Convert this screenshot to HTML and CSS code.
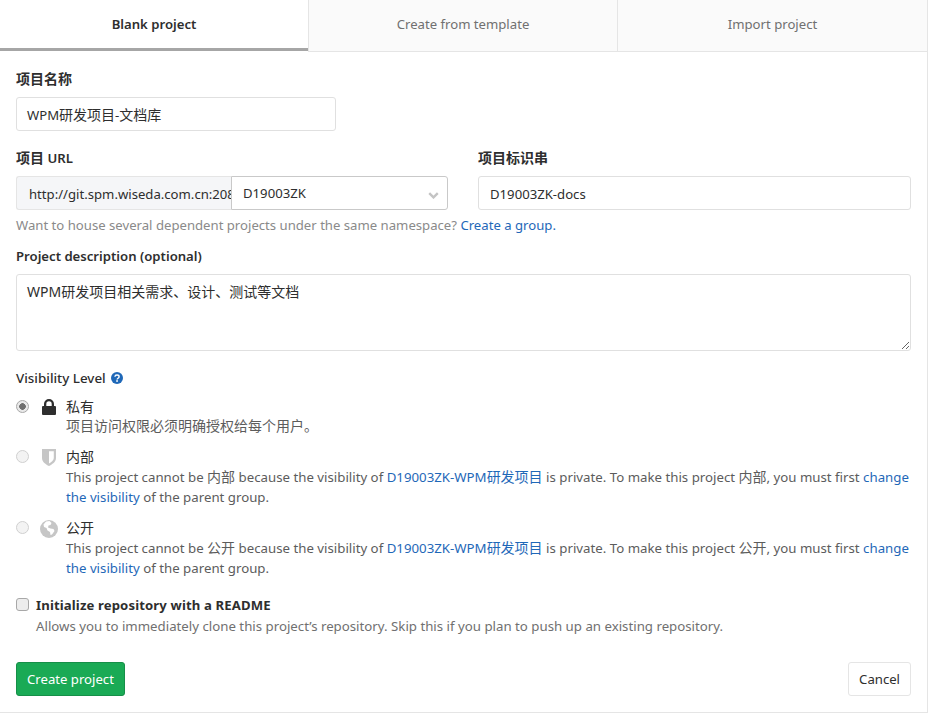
FILE: index.html
```html
<!DOCTYPE html>
<html lang="zh">
<head>
<meta charset="utf-8">
<title>New project</title>
<link rel="stylesheet" href="styles.css">
</head>
<body>
<div class="panel">
  <nav class="tabs">
    <a class="tab active">Blank project</a>
    <a class="tab middle">Create from template</a>
    <a class="tab">Import project</a>
  </nav>
  <form class="form">
    <div class="group name-group">
      <div class="label"><span class="cjk">项目名称</span></div>
      <div class="control name-input">WPM<span class="cjk">研发项目</span>-<span class="cjk">文档库</span></div>
    </div>
    <div class="url-row">
      <div class="url-col">
        <div class="label"><span class="cjk">项目</span> URL</div>
        <div class="url-input">
          <span class="addon">http://git.spm.wiseda.com.cn:20880/</span>
          <div class="select">
            <span>D19003ZK</span>
            <svg class="chevron" viewBox="0 0 14 9" width="11" height="7"><path d="M1.500 1.500 7 7l5.500-5.500" fill="none" stroke="#c4c4c4" stroke-width="3"/></svg>
          </div>
        </div>
      </div>
      <div class="slug-col">
        <div class="label"><span class="cjk">项目标识串</span></div>
        <div class="control slug">D19003ZK-docs</div>
      </div>
    </div>
    <p class="help">Want to house several dependent projects under the same namespace? <a class="link">Create a group.</a></p>
    <div class="group desc-group">
      <div class="label">Project description (optional)</div>
      <textarea class="control desc">WPM研发项目相关需求、设计、测试等文档</textarea>
    </div>
    <div class="vis-title">
      <span>Visibility Level</span>
      <svg class="q" viewBox="0 0 12 12" width="12" height="12"><circle cx="6" cy="6" r="6" fill="#1f68b8"/><path d="M3.900 4.700C4 3.500 4.900 3 6 3c1.200 0 2.100.7 2.100 1.700 0 1.600-2 1.500-2 2.900" fill="none" stroke="#fff" stroke-width="1.400"/><rect x="5.200" y="8.200" width="1.700" height="1.600" fill="#fff"/></svg>
    </div>
    <div class="vis-option first">
      <input class="radio checked" type="radio" name="vis" checked>
      <svg class="vis-icon" viewBox="0 0 14 16" width="14" height="16"><path d="M2 7V5a5 5 0 0 1 10 0v2h1a1 1 0 0 1 1 1v7a1 1 0 0 1-1 1H1a1 1 0 0 1-1-1V8a1 1 0 0 1 1-1Zm2.300 0h5.400V5a2.700 2.700 0 0 0-5.400 0Z" fill="#2e2e2e"/></svg>
      <div class="vis-text">
        <div class="vis-name cjk">私有</div>
        <div class="vis-desc tight cjk">项目访问权限必须明确授权给每个用户。</div>
      </div>
    </div>
    <div class="vis-option">
      <input class="radio" type="radio" name="vis" disabled>
      <svg class="vis-icon" viewBox="0 0 14 17" width="14" height="17"><path d="M0 0h14v9c0 4-4 6.500-7 8-3-1.500-7-4-7-8Zm7 2.200v12.300c2-1.100 4.800-3 4.800-5.500V2.200Z" fill="#c6c6c6"/></svg>
      <div class="vis-text">
        <div class="vis-name cjk">内部</div>
        <div class="vis-desc">This project cannot be <span class="cjk">内部</span> because the visibility of <a class="link">D19003ZK-WPM<span class="cjk">研发项目</span></a> is private. To make this project <span class="cjk">内部</span>, you must first <a class="link">change the visibility</a> of the parent group.</div>
      </div>
    </div>
    <div class="vis-option">
      <input class="radio" type="radio" name="vis" disabled>
      <svg class="vis-icon globe" viewBox="0 0 18 18" width="18" height="18"><circle cx="9" cy="9" r="9" fill="#c6c6c6"/><path d="M6 1.500 9.500 1l2 2-1 2-2 .5-.5 2 2.500 1 3 .5 1 2-2.500 3.500-1.500.5-.5-3-2.500-1.500-1-2.500L4 7l-.5-2.500Z" fill="#fff"/></svg>
      <div class="vis-text">
        <div class="vis-name cjk">公开</div>
        <div class="vis-desc">This project cannot be <span class="cjk">公开</span> because the visibility of <a class="link">D19003ZK-WPM<span class="cjk">研发项目</span></a> is private. To make this project <span class="cjk">公开</span>, you must first <a class="link">change the visibility</a> of the parent group.</div>
      </div>
    </div>
    <div class="readme">
      <input class="check" type="checkbox">
      <div>
        <div class="readme-title">Initialize repository with a README</div>
        <div class="readme-desc">Allows you to immediately clone this project’s repository. Skip this if you plan to push up an existing repository.</div>
      </div>
    </div>
    <div class="actions">
      <button class="btn primary" type="button">Create project</button>
      <button class="btn" type="button">Cancel</button>
    </div>
  </form>
</div>
</body>
</html>
```

FILE: styles.css
```css
* { box-sizing: border-box; }
html, body { margin: 0; background: #fff; }
body {
  font-family: "Noto Sans", "Noto Sans CJK SC", sans-serif;
  font-size: 13.15px;
  color: #2e2e2e;
  line-height: 20px;
}
.cjk { font-size: 14px; }
.panel {
  width: 928px;
  height: 713px;
  border-right: 1px solid #e5e5e5;
  border-bottom: 1px solid #e5e5e5;
}
.tabs {
  display: grid;
  grid-template-columns: 308px 310px 1fr;
  height: 52px;
}
.tab {
  display: flex;
  align-items: center;
  justify-content: center;
  padding-bottom: 3px;
  background: #fafafa;
  color: #707070;
  border-bottom: 1px solid #e5e5e5;
}
.middle {
  border-left: 1px solid #e5e5e5;
  border-right: 1px solid #e5e5e5;
}
.active {
  background: #fff;
  color: #2e2e2e;
  font-weight: 600;
  padding-bottom: 0;
  border-bottom: 3px solid #a6a6a6;
  height: 51px;
}
.form { padding: 17px 16px 0; }
.label {
  display: block;
  font-weight: 600;
  line-height: 20px;
  margin-bottom: 8px;
}
.control {
  display: flex;
  align-items: center;
  width: 100%;
  height: 34px;
  padding: 0 10px;
  border: 1px solid #e0e0e0;
  border-radius: 3px;
  font: inherit;
  color: #2e2e2e;
  background: #fff;
  outline: 0;
}
.name-input { width: 320px; padding-top: 1px; }
.slug { padding-left: 11px; padding-top: 1px; }
.url-row {
  display: flex;
  gap: 30px;
  margin-top: 17px;
}
.url-col { width: 432px; }
.slug-col { width: 433px; }
.url-input {
  display: flex;
  height: 34px;
}
.addon {
  width: 215px;
  overflow: hidden;
  white-space: nowrap;
  padding: 0 0 0 12px;
  line-height: 34px;
  background: #f5f6f8;
  border: 1px solid #e5e5e5;
  border-right: 0;
  border-radius: 3px 0 0 3px;
}
.select {
  flex: 1;
  display: flex;
  align-items: center;
  justify-content: space-between;
  padding: 0 8px 1px 11px;
  background: #fff;
  border: 1px solid #c9c9c9;
  border-radius: 0 3px 3px 0;
}
.chevron { margin-top: 5px; }
.help {
  margin: 5px 0 0;
  color: #8a8a8a;
}
.link { color: #1f68b8; }
.desc-group { margin-top: 11px; }
.desc {
  display: block;
  height: 77px;
  padding: 7px 10px;
  font-size: 14px;
  resize: vertical;
}
.vis-title {
  display: flex;
  align-items: center;
  gap: 5px;
  margin-top: 17px;
  font-weight: 500;
  font-size: 13.4px;
}
.vis-option {
  display: grid;
  grid-template-columns: 22px 28px 1fr;
  margin-top: 11px;
}
.vis-option.first { margin-top: 9px; }
.radio {
  appearance: none;
  width: 13px;
  height: 13px;
  margin: 3px 0 0;
  border: 1px solid #d0d0d0;
  border-radius: 50%;
  background: #f3f3f3;
}
.radio.checked {
  border-color: #a8a8a8;
  background: radial-gradient(circle, #6e6e6e 0 3px, #e9e9e9 3.600px);
}
.vis-icon { margin-top: 2px; justify-self: start; margin-left: 4px; }
.vis-icon.globe { margin-left: 2px; }
.vis-name { line-height: 20px; }
.vis-desc { color: #5c5c5c; line-height: 20px; font-size: 13.25px; }
.vis-desc .cjk { font-size: 14px; }
.vis-desc.cjk { font-size: 14px; }
.tight { margin-top: -1px; }
.readme {
  display: flex;
  gap: 7px;
  margin-top: 17px;
}
.check {
  appearance: none;
  flex: none;
  width: 13px;
  height: 13px;
  margin: 3px 0 0;
  border: 1px solid #a8a8a8;
  border-radius: 3px;
  background: #ededed;
}
.readme-title { font-weight: 700; line-height: 20px; letter-spacing: .12px; }
.readme-desc { color: #707070; line-height: 20px; margin-top: 1px; font-size: 13.25px; }
.actions {
  display: flex;
  justify-content: space-between;
  margin-top: 26px;
}
.btn {
  height: 34px;
  padding: 0 10px;
  font: inherit;
  color: #2e2e2e;
  background: #fff;
  border: 1px solid #e5e5e5;
  border-radius: 3px;
}
.primary {
  color: #fff;
  background: #1aaa55;
  border-color: #168f48;
}
```
